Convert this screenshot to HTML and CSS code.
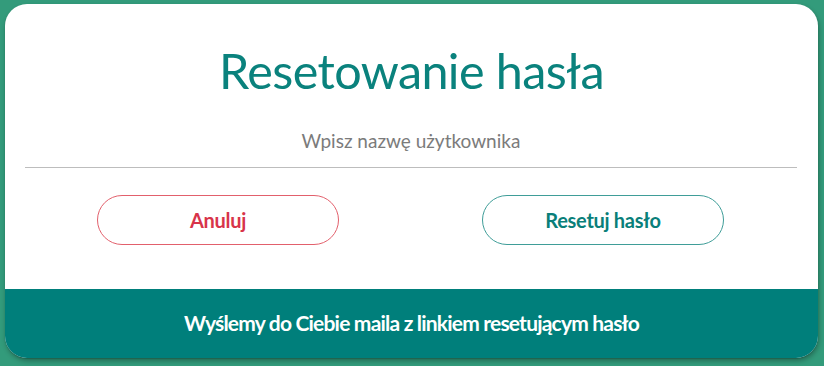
FILE: index.html
```html
<!DOCTYPE html>
<html lang="pl">
<head>
<meta charset="utf-8">
<link rel="stylesheet" href="styles.css">
</head>
<body>
<div class="card">
  <div class="content">
    <h1 class="title">Resetowanie hasła</h1>
    <div class="field">
      <input class="input" type="text" placeholder="Wpisz nazwę użytkownika">
    </div>
    <div class="actions">
      <button class="btn btn-cancel">Anuluj</button>
      <button class="btn btn-reset">Resetuj hasło</button>
    </div>
  </div>
  <div class="footer">Wyślemy do Ciebie maila z linkiem resetującym hasło</div>
</div>
</body>
</html>
```
FILE: styles.css
```css
html, body {
  margin: 0;
  padding: 0;
}
body {
  width: 824px;
  height: 366px;
  background: #339b7b;
  font-family: Lato, "Noto Sans", sans-serif;
  padding: 4px 6px 0 5px;
  box-sizing: border-box;
}
.card {
  width: 813px;
  height: 354px;
  background: #ffffff;
  border-radius: 22px;
  overflow: hidden;
  display: flex;
  flex-direction: column;
  box-shadow: 0 1px 1px rgba(0,0,0,0.15), 1px 3px 5px rgba(0,0,0,0.3);
}
.content {
  flex: 1;
  display: flex;
  flex-direction: column;
  align-items: center;
}
.title {
  margin: 36px 0 0 0;
  font-weight: 400;
  font-size: 48.5px;
  line-height: 60px;
  color: #0a827d;
  letter-spacing: -0.6px;
}
.field {
  align-self: stretch;
  margin: 26px 21px 0 20px;
}
.input {
  display: block;
  width: 100%;
  box-sizing: border-box;
  border: none;
  border-bottom: 1px solid #bdbdbd;
  outline: none;
  background: transparent;
  text-align: center;
  font-family: Lato, "Noto Sans", sans-serif;
  font-size: 19px;
  padding: 3px 0 15px 0;
  color: #555;
}
.input::placeholder {
  color: #7b7b7b;
}
.actions {
  align-self: stretch;
  display: flex;
  justify-content: space-between;
  margin: 27px 94px 0 92px;
}
.btn {
  width: 242px;
  height: 50px;
  border-radius: 25px;
  background: #fff;
  font-family: Lato, "Noto Sans", sans-serif;
  font-weight: 700;
  font-size: 20px;
  letter-spacing: -0.3px;
  cursor: pointer;
}
.btn-cancel {
  border: 1px solid #e2606c;
  color: #d8344a;
}
.btn-reset {
  border: 1px solid #3f9d98;
  color: #0a7f7a;
}
.footer {
  height: 69px;
  background: #007f7b;
  color: #fff;
  display: flex;
  align-items: center;
  justify-content: center;
  font-weight: 700;
  font-size: 21px;
  letter-spacing: -0.8px;
  padding-bottom: 2px;
  box-sizing: border-box;
}
```
